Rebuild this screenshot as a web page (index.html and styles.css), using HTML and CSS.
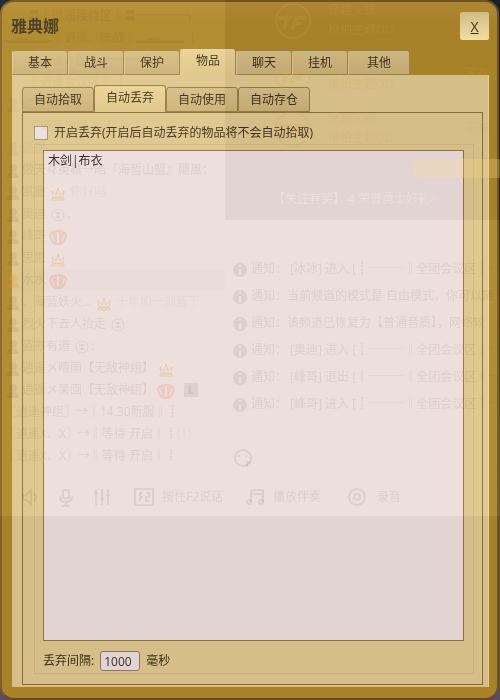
FILE: index.html
```html
<!DOCTYPE html>
<html lang="zh-CN">
<head>
<meta charset="utf-8">
<meta name="viewport" content="width=device-width, initial-scale=1">
<title>雅典娜</title>
<link rel="stylesheet" href="styles.css">
</head>
<body>
<svg class="defs" aria-hidden="true">
  <symbol id="crown" viewBox="0 0 16 16"><path d="M2 6l4 4 2-7 2 7 4-4-1 6H3zM2 13h12v2H2z" fill="none" stroke="currentColor"/></symbol>
  <symbol id="shell" viewBox="0 0 16 16"><path d="M8 2c4 0 7 1 8 4-1 4-3 8-5 9H5C3 14 1 10 0 6c1-3 4-4 8-4zM3 4l3 10M6 3v11M10 3v11M13 4l-3 10" fill="none" stroke="currentColor" stroke-width="2"/></symbol>
  <symbol id="medal" viewBox="0 0 16 16"><circle cx="8" cy="8" r="6" fill="none" stroke="currentColor"/><path d="M5 6h6M8 5v6M5 10h6" stroke="currentColor"/></symbol>
  <symbol id="person" viewBox="0 0 16 16"><circle cx="8" cy="5" r="4" fill="currentColor"/><path d="M2 15c0-8 12-8 12 0z" fill="currentColor"/></symbol>
  <symbol id="info" viewBox="0 0 16 16"><path d="M8 1a7 7 0 1 0 .1 0zM7 3h2v2H7zM7 7h2v6H7z" fill="currentColor" fill-rule="evenodd"/></symbol>
  <symbol id="logo" viewBox="0 0 38 38"><circle cx="19" cy="19" r="17" fill="none" stroke="currentColor" stroke-width="2"/><path d="M5 14h14l-2 4h-3l-3 9H8l3-9H5zM21 14h12l-2 4h-7l-1 2h6l-2 3h-5l-2 4h-4z" fill="currentColor"/></symbol>
</svg>
<main class="window">
  <header class="titlebar">
    <h1>雅典娜</h1>
    <button class="close" type="button" aria-label="关闭">X</button>
  </header>
  <nav class="tabs">
    <button type="button">基本</button><button type="button">战斗</button><button type="button">保护</button><button type="button" class="active">物品</button><button type="button">聊天</button><button type="button">挂机</button><button type="button" class="last">其他</button>
  </nav>
  <section class="page">
    <nav class="tabs subtabs">
      <button type="button">自动拾取</button><button type="button" class="active">自动丢弃</button><button type="button">自动使用</button><button type="button">自动存仓</button>
    </nav>
    <div class="panel">
      <label class="toggle"><input type="checkbox">开启丢弃(开启后自动丢弃的物品将不会自动拾取)</label>
      <div class="group">
        <textarea aria-label="丢弃物品" spellcheck="false">木剑|布衣</textarea>
        <div class="interval">
          <label for="interval">丢弃间隔:</label>
          <input id="interval" type="text" value="1000">
          <span>毫秒</span>
        </div>
      </div>
    </div>
  </section>
</main>
<div class="glass glow" aria-hidden="true"><div class="glow-rooms"></div><div class="glow-chat"></div></div>
<div class="glass" aria-hidden="true">
  <div class="rooms">
    <p class="in">〓‖逍遥接待区‖〓━━━━┓</p>
    <p>▂▃▂▂‖逍遥、统战‖▂▃▂▂ ┋</p>
    <p class="in dim">‖逍遥人区‖ ━━━ ┋</p>
    <p class="in dim">‖逍遥会议区‖ ┋</p>
    <p class="dim"><svg><use href="#person"/></svg>逍遥接待 ‖ ┋</p>
    <p class="in dim">‖逍遥神组‖ ┋</p>
    <p class="dim"><svg><use href="#person"/></svg>逍遥</p>
    <p><svg><use href="#person"/></svg>傲天々英雄→皓『海哲山盟』飓風；</p>
    <p><svg><use href="#person"/></svg>凯撒 <svg class="gold"><use href="#crown"/></svg> <span class="dim">你好吗</span></p>
    <p><svg><use href="#person"/></svg>奥迪 <svg><use href="#medal"/></svg>.</p>
    <p><svg><use href="#person"/></svg>峰哥 <svg class="red"><use href="#shell"/></svg></p>
    <p><svg><use href="#person"/></svg>思思 <svg class="gold"><use href="#crown"/></svg></p>
    <p class="selected"><svg class="gold"><use href="#person"/></svg>水水 <svg class="red"><use href="#shell"/></svg></p>
    <p><svg><use href="#person"/></svg>、海蓝妖火... <svg class="gold"><use href="#crown"/></svg> <span class="dim">十年如一刻留下</span></p>
    <p><svg><use href="#person"/></svg>烈火下去人抬走 <svg><use href="#medal"/></svg></p>
    <p><svg><use href="#person"/></svg>盗亦有道 <svg><use href="#medal"/></svg>:</p>
    <p><svg><use href="#person"/></svg>逍遥メ晴雨【无敌神组】 <svg class="gold"><use href="#crown"/></svg></p>
    <p><svg><use href="#person"/></svg>逍遥メ果園【无敌神组】 <svg class="red"><use href="#shell"/></svg> <b>L</b></p>
    <p>〖逍遥神组〗→‖14.30新服‖┋</p>
    <p>〖逍遥X、X〗→‖等待 开启‖┋<span class="dim">(1)</span></p>
    <p>〖逍遥X、X〗→‖等待 开启‖┋</p>
  </div>
  <div class="chat">
    <div class="feed">
      <div class="card"><svg><use href="#logo"/></svg><p>穿越火线<br>抢拍主题DD</p></div>
      <div class="card"><svg><use href="#logo"/></svg><p>穿越火线<br>抢拍主题DD</p><i>正在</i></div>
      <div class="card"><svg><use href="#logo"/></svg><p>穿越火线<br>抢拍主题DD</p><i>正在</i></div>
      <div class="pill"></div>
      <p class="caption">【关注有奖】 4 荣誉勇士好礼&gt;</p>
    </div>
    <div class="notices">
      <p><svg><use href="#info"/></svg>通知： [冰冰] 进入 [┋───‖全团会议区‖──</p>
      <p><svg><use href="#info"/></svg>通知：当前频道的模式是 自由模式，你可以随</p>
      <p><svg><use href="#info"/></svg>通知：该频道已恢复为【普通音质】，网络较</p>
      <p><svg><use href="#info"/></svg>通知： [奥迪] 进入 [┋───‖全团会议区‖──</p>
      <p><svg><use href="#info"/></svg>通知： [峰哥] 退出 [┋───‖全团会议区‖──</p>
      <p><svg><use href="#info"/></svg>通知： [峰哥] 进入 [┋───‖全团会议区‖──</p>
    </div>
    <svg class="face" viewBox="0 0 20 20"><circle cx="10" cy="10" r="8"/><path d="M6 7v2M13 7v2M14 19v-5l4 1"/></svg>
  </div>
  <div class="toolbar">
    <svg viewBox="0 0 20 20"><path d="M3 8v5h3l5 4V3L6 8zM14 6q4 4 0 9"/></svg>
    <svg viewBox="0 0 20 20"><path d="M7 3h6v8H7zM4 9q0 6 6 6t6-6M10 15v4M6 19h8"/></svg>
    <svg viewBox="0 0 20 20"><path d="M4 2v16M10 2v16M16 2v16M2 6h4M8 12h4M14 8h4"/></svg>
    <svg viewBox="0 0 20 20"><path d="M1 2h18v16H1zM6 14V6h3M6 10h3M12 6h3v4h-3v4h3"/></svg>
    <span class="talk">按住F2说话</span>
    <svg viewBox="0 0 20 20"><path d="M6 15V3h12v12M6 7h12"/><circle cx="4" cy="15" r="2"/><circle cx="16" cy="15" r="2"/></svg>
    <span class="music">播放伴奏</span>
    <svg viewBox="0 0 20 20"><circle cx="10" cy="10" r="8"/><circle cx="10" cy="10" r="3"/></svg>
    <span>录音</span>
  </div>
</div>
</body>
</html>
```
FILE: styles.css
```css
* {
  box-sizing: border-box;
}

body {
  margin: 0;
  position: relative;
  overflow: hidden;
  background: linear-gradient(#17202f, #17202f 30%, #5d4a63 75%);
  color: #3a301c;
  font: 12px/18px "Open Sans", "Noto Sans CJK SC", sans-serif;
}

button,
input,
textarea {
  color: inherit;
  font: inherit;
}

h1,
p {
  margin: 0;
}

.defs {
  display: none;
}

.window {
  display: flex;
  flex-direction: column;
  min-height: 100vh;
  margin-right: 1px;
  padding: 10px 8px 11px 10px;
  border: 2px solid #6d5321;
  border-left-color: #80602a;
  border-bottom-color: #67482b;
  border-radius: 14px;
  background: linear-gradient(#ad8832, #a88229 20px, #a88229);
}

.titlebar {
  display: flex;
  justify-content: space-between;
  height: 36px;
}

h1 {
  font-size: 16px;
  line-height: 28px;
  margin-left: -1px;
  color: #423620;
}

.close {
  width: 29px;
  height: 28px;
  padding: 2px 0 0;
  border: 0;
  border-radius: 2px;
  background: linear-gradient(#cfbc85, #f3dda0);
  font-size: 14px;
  text-decoration: underline;
}

.tabs {
  display: flex;
  align-items: flex-end;
  height: 27px;
}

.tabs button {
  width: 56px;
  height: 25px;
  padding: 0;
  border: 1px solid #9a814b;
  border-left-color: #d6c190;
  border-radius: 3px 3px 0 0;
  background: linear-gradient(#cdb681, #c3aa73);
}

.tabs button.last {
  width: 62px;
}

.tabs button.active {
  height: 27px;
  padding-bottom: 2px;
  border-bottom: 0;
  background: linear-gradient(#e3c98e, #d5bd85);
}

.page {
  display: flex;
  flex: 1;
  flex-direction: column;
  padding: 10px 5px 2px 10px;
  background: #d5be87;
  border-right: 1px solid #dfcda0;
}

.tabs.subtabs button {
  width: 72px;
  border-color: #927943;
}

.panel {
  display: flex;
  flex: 1;
  flex-direction: column;
  padding: 11px 8px 10px 11px;
  border: 1px solid #836b38;
}

.toggle {
  display: flex;
  align-items: center;
  gap: 6px;
  height: 18px;
}

.toggle input {
  appearance: none;
  width: 14px;
  height: 14px;
  margin: 0;
  border: 1px solid #a48c67;
  background: #e3d5d9;
}

.group {
  display: flex;
  flex: 1;
  flex-direction: column;
  margin-top: 2px;
  padding: 5px 9px 1px 8px;
  border: 1px solid #c8b17a;
}

textarea {
  flex: 1;
  width: 100%;
  padding: 1px 4px;
  border: 1px solid #8b7142;
  border-radius: 0;
  outline: 0;
  resize: none;
  background: #e2d4d3;
  color: #2c2724;
}

.interval {
  display: flex;
  align-items: center;
  gap: 6px;
  height: 31px;
  padding-top: 9px;
}

.interval input {
  width: 40px;
  height: 20px;
  padding: 0 3px;
  border: 1px solid #8c785c;
  border-radius: 3px;
  background: #e2d4d6;
}

/* Translucent view of the chat client behind the window */
.glass {
  position: absolute;
  inset: 0;
  display: grid;
  grid-template-columns: 225px 1fr;
  grid-template-rows: 478px 38px 1fr;
  overflow: hidden;
  pointer-events: none;
  color: rgba(90, 65, 50, 0.1);
  white-space: nowrap;
}

.glow {
  grid-template-rows: 220px 296px 1fr;
  mix-blend-mode: plus-lighter;
}

.glow-rooms,
.glow-chat {
  background: #0b0b09;
}

.glow-rooms {
  grid-row: 1 / 3;
}

.glow-chat {
  grid-area: 2 / 2;
}

.glass p svg {
  width: 18px;
  height: 16px;
  vertical-align: middle;
}

.rooms {
  padding: 5px 0 0 4px;
}

.rooms p {
  height: 22px;
  line-height: 22px;
}

.rooms p.in {
  padding-left: 24px;
}

.rooms .selected {
  background: rgba(110, 90, 90, 0.02);
}

.rooms .gold {
  color: rgba(222, 150, 50, 0.25);
}

.rooms .red {
  color: rgba(230, 110, 60, 0.18);
}

.rooms b {
  display: inline-block;
  width: 14px;
  margin-left: 6px;
  line-height: 14px;
  text-align: center;
  background: rgba(90, 75, 75, 0.1);
}

.dim {
  opacity: 0.5;
}

.feed {
  height: 220px;
  color: rgba(222, 165, 75, 0.17);
}

.card {
  display: flex;
  align-items: flex-start;
  gap: 16px;
  height: 54px;
  padding-left: 49px;
  line-height: 20px;
}

.card svg {
  width: 38px;
  height: 38px;
  margin-top: 2px;
}

.card i {
  margin: 10px 0 0 56px;
  font-style: normal;
}

.pill {
  height: 19px;
  margin: -3px 0 0 187px;
  border-radius: 10px 0 0 10px;
  background: rgba(255, 225, 140, 0.25);
}

.caption {
  padding: 12px 0 0 48px;
  color: rgba(255, 245, 245, 0.3);
}

.notices {
  padding: 35px 0 0 6px;
}

.notices p {
  height: 27px;
  line-height: 27px;
}

.notices svg {
  margin-right: 2px;
}

.face {
  display: block;
  width: 20px;
  height: 20px;
  margin: 31px 0 0 8px;
}

.toolbar {
  grid-column: 1 / -1;
  display: flex;
  align-items: center;
  padding-left: 20px;
}

.toolbar svg {
  width: 20px;
  height: 20px;
  margin-right: 16px;
}

.toolbar svg:nth-child(3) {
  margin-right: 22px;
}

.toolbar svg:nth-child(4),
.toolbar svg:nth-child(6) {
  margin-right: 8px;
}

.toolbar svg:nth-child(8) {
  margin-right: 10px;
}

.talk {
  margin-right: 22px;
}

.music {
  margin-right: 26px;
}

.face,
.toolbar svg {
  fill: none;
  stroke: currentColor;
  stroke-width: 2;
}
```
